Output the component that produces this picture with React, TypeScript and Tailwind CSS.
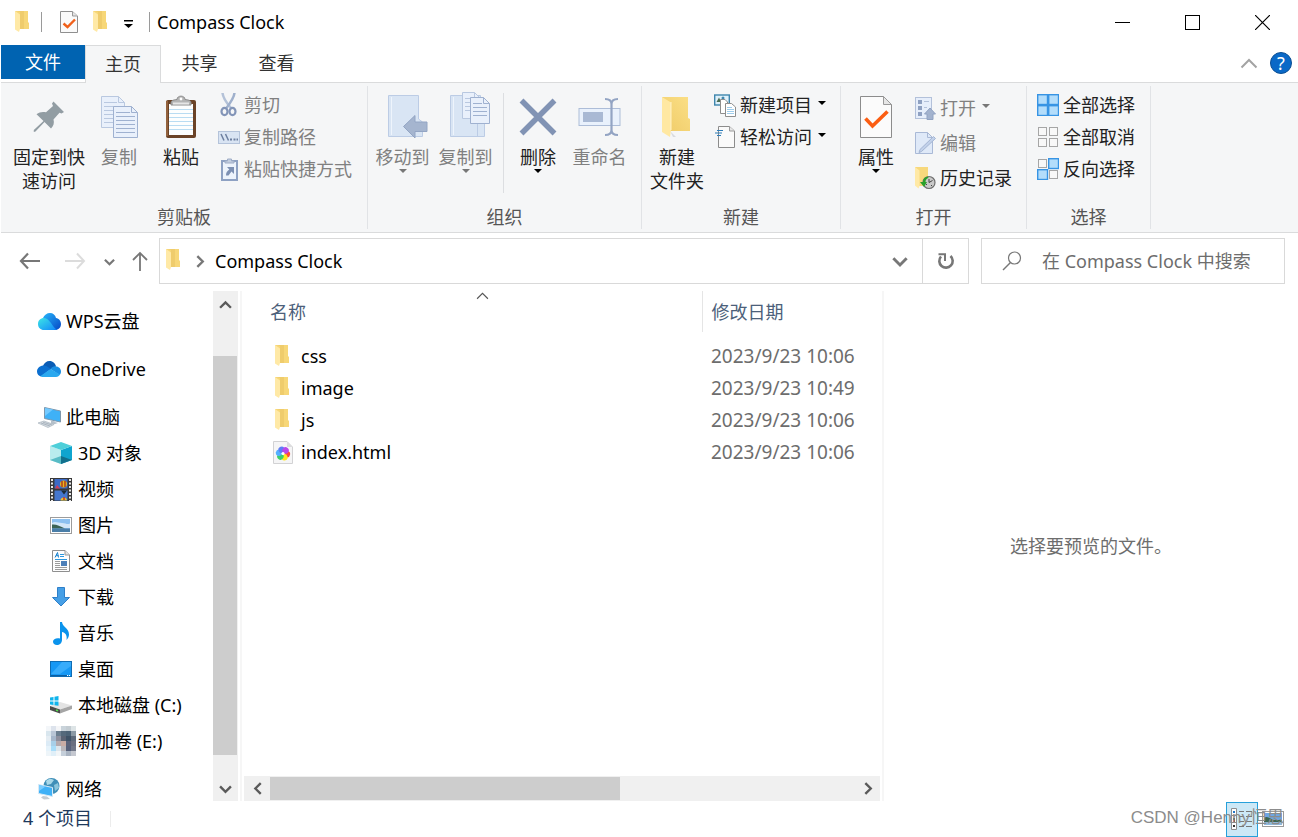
import type { ReactNode } from "react";

/* ---------- icons ---------- */

function SmallFolder() {
  return (
    <svg width="15" height="22" viewBox="0 0 15 22" aria-hidden="true">
      <path d="M0 0H13V11L14 12V18H3Z" fill="#f7d778" />
      <path d="M5 1V18H9V0H2Z" fill="#efcc6c" />
      <path d="M0 0L5 3.500V18L4 21L0 18.500Z" fill="#ffe9a6" />
    </svg>
  );
}

function BigFolder() {
  return (
    <svg width="30" height="42" viewBox="0 0 30 42" aria-hidden="true">
      <defs>
        <linearGradient id="bf" x1="0" y1="1" x2="1" y2="0">
          <stop offset="0" stopColor="#efcb68" />
          <stop offset="1" stopColor="#fbdf86" />
        </linearGradient>
      </defs>
      <path d="M8 35L11 41H14Z" fill="#d9dbdf" />
      <path d="M0 1H26V22L28 23V35H8Z" fill="url(#bf)" />
      <path d="M0 1L9 6.500V34L8 41L0 36Z" fill="#ffe8a2" />
      <path d="M9 6V34" stroke="#fff2c8" />
    </svg>
  );
}

function CheckDoc({ small = false }: { small?: boolean }) {
  return (
    <svg width={small ? 18 : 32} height={small ? 22 : 42} viewBox={small ? "0 0 18 22" : "0 0 32 42"} aria-hidden="true">
      {small ? (
        <>
          <path d="M.5 .5H12.500L17.500 5V21.500H.5Z" fill="#fafafa" stroke="#8f8f8f" />
          <path d="M12.500 .5V5H17.500" fill="#e4e4e4" stroke="#9a9a9a" />
          <path d="M3.500 12.500L7.500 16L15 8.500" fill="none" stroke="#f0601a" strokeWidth="2.400" />
        </>
      ) : (
        <>
          <path d="M.5 .5H23.500L31.500 8.500V41.500H.5Z" fill="#fbfbfb" stroke="#8c8c8c" />
          <path d="M23.500 .5V8.500H31.500Z" fill="#e6e6e6" stroke="#9a9a9a" />
          <path d="M5.500 22.500L12.500 30L27.500 15.500" fill="none" stroke="#fb5e13" strokeWidth="3.600" />
        </>
      )}
    </svg>
  );
}

function Pin() {
  return (
    <svg width="32" height="32" viewBox="0 0 32 32" aria-hidden="true">
      <path
        d="M20.500 .5L31 11L28.500 12.500L26.500 11.700L20.500 18.500C21.500 22 20.500 25 18 27.500L11.500 21L2.500 30.500L.8 31V29L10.500 20L3.500 13.300C6.500 11 9.500 10.400 13 11.300L20 5L19 2.500Z"
        fill="#929da3"
      />
    </svg>
  );
}

function PageLines({ x, y, w, h, dim = false }: { x: number; y: number; w: number; h: number; dim?: boolean }) {
  const stroke = dim ? "#b9c8e0" : "#9fb1d0";
  const rows = Math.floor((h - 8) / 4);
  return (
    <g transform={`translate(${x} ${y})`}>
      <path d={`M.5 .5H${w - 6.5}L${w - 0.5} 6.500V${h - 0.5}H.5Z`} fill="#e9f0fb" stroke={stroke} />
      <path d={`M${w - 6.5} .5V6.500H${w - 0.5}`} fill="none" stroke={stroke} />
      {Array.from({ length: rows }, (_, i) => (
        <path key={i} d={`M3 ${6.5 + i * 4}H${i === 0 ? w - 8 : w - 3}`} stroke={stroke} />
      ))}
    </g>
  );
}

function CopyIcon() {
  return (
    <svg width="37" height="42" viewBox="0 0 37 42" aria-hidden="true">
      <PageLines x={0} y={0} w={24} h={32} dim />
      <PageLines x={12} y={10} w={25} h={32} />
    </svg>
  );
}

function PasteIcon() {
  return (
    <svg width="32" height="44" viewBox="0 0 32 44" aria-hidden="true">
      <rect x="1" y="5" width="30" height="38" rx="2" fill="#6b4327" />
      <path d="M2 6V41" stroke="#93623d" strokeWidth="2" />
      <rect x="4" y="9" width="24" height="31" fill="#fdfefe" />
      <path d="M4 14.500H28M4 18.500H28M4 22.500H28M4 26.500H28M4 30.500H28M4 34.500H28" stroke="#b9dcf2" />
      <path d="M6 10V8C6 5 9 5 12 4.500C12 0 20 0 20 4.500C23 5 26 5 26 8V10Z" fill="#b4b4b4" stroke="#8b8b8b" />
      <circle cx="16" cy="4" r="1.400" fill="#fff" />
      <path d="M8 8.500H24" stroke="#e6e6e6" strokeWidth="2" />
    </svg>
  );
}

function CutIcon() {
  return (
    <svg width="18" height="24" viewBox="0 0 18 24" fill="none" aria-hidden="true">
      <path d="M2.500 0C3 5 6.500 10 11 15" stroke="#b4c2d8" strokeWidth="2.500" />
      <path d="M14.500 0C14 5 11 9 6.500 15" stroke="#9fb0cc" strokeWidth="2.500" />
      <ellipse cx="4.500" cy="18.500" rx="3" ry="3.600" stroke="#8395b8" strokeWidth="2.200" />
      <ellipse cx="12.500" cy="18.500" rx="3" ry="3.600" stroke="#8395b8" strokeWidth="2.200" />
    </svg>
  );
}

function PathIcon() {
  return (
    <svg width="22" height="13" viewBox="0 0 22 13" aria-hidden="true">
      <rect x=".5" y=".5" width="21" height="12" fill="#d9e4f3" stroke="#b4c3da" />
      <path d="M3 3L6 9.500M7.500 3L10.500 9.500" stroke="#6d7fa0" strokeWidth="1.500" />
      <path d="M12 8.500H14M15.500 8.500H17.500M18.500 8.500H20" stroke="#6d7fa0" strokeWidth="2" />
    </svg>
  );
}

function PasteShortcutIcon() {
  return (
    <svg width="17" height="23" viewBox="0 0 17 23" aria-hidden="true">
      <rect x="1" y="3" width="15" height="19" fill="#edf3fc" stroke="#8ea1c3" strokeWidth="2" />
      <path d="M4 5V3H6.500V1H10.500V3H13V5Z" fill="#c3cee0" stroke="#9eacc6" />
      <path d="M6 9H13V16L10.500 13.500L7.500 17.500H5C5 14.500 6 13 8.300 11.500Z" fill="#7d90b3" />
    </svg>
  );
}

function MoveToIcon() {
  return (
    <svg width="51" height="44" viewBox="-11 0 51 44" aria-hidden="true">
      <path d="M.5 .5H30.500V24L34.500 27V41.500H.5Z" fill="#d9e5f4" stroke="#bccce5" />
      <path d="M3.500 2V40" stroke="#eef4fc" />
      <path d="M15.500 31.500L27 20.500V27H39V36.500H27V43Z" fill="#a5b5cf" stroke="#93a5c4" />
    </svg>
  );
}

function CopyToIcon() {
  return (
    <svg width="52" height="50" viewBox="-10 1 52 50" aria-hidden="true">
      <path d="M.5 4.500H30.500V29L34.500 31V45.500H.5Z" fill="#d9e5f4" stroke="#bccce5" />
      <path d="M27.500 31V45" stroke="#bccce5" />
      <path d="M3.500 6V44" stroke="#eef4fc" />
      <PageLines x={12} y={1} w={19} h={27} dim />
      <PageLines x={20} y={6} w={20} h={27} />
    </svg>
  );
}

function DeleteIcon() {
  return (
    <svg width="38" height="38" viewBox="0 0 38 38" aria-hidden="true">
      <path d="M2.500 2.500L35.500 35.500M35.500 2.500L2.500 35.500" stroke="#8193b4" strokeWidth="5.500" />
    </svg>
  );
}

function RenameIcon() {
  return (
    <svg width="44" height="40" viewBox="0 0 44 40" fill="none" aria-hidden="true">
      <rect x="1" y="11.500" width="41" height="17" fill="#e9f1fc" stroke="#adbdd8" />
      <rect x="5" y="15" width="20" height="10" fill="#a9b9d4" />
      <path d="M33.500 6V34M27 2C31 2 33.500 3 33.500 7C33.500 3 36 2 40 2M27 38C31 38 33.500 37 33.500 33C33.500 37 36 38 40 38" stroke="#93a4c3" strokeWidth="2.200" />
    </svg>
  );
}

function NewItemIcon() {
  return (
    <svg width="22" height="23" viewBox="0 0 22 23" aria-hidden="true">
      <rect x=".7" y="1" width="14.600" height="10" fill="#dff1fb" stroke="#3f86ad" strokeWidth="1.400" />
      <path d="M2.500 8L5 3.500L7 8Z" fill="#4b6d53" />
      <circle cx="9" cy="4" r="1.500" fill="#3f86ad" />
      <path d="M6.500 5.500H11L13.500 8V19.500H6.500Z" fill="#fff" stroke="#8e8e8e" />
      <path d="M11.500 9.500H17.500L21.500 13V22.500H11.500Z" fill="#fff" stroke="#8e8e8e" />
      <path d="M13 13.500H18M13 15.500H20M13 17.500H20M13 19.500H20" stroke="#9fcdec" />
    </svg>
  );
}

function EasyAccessIcon() {
  return (
    <svg width="20" height="22" viewBox="0 0 20 22" aria-hidden="true">
      <path d="M3.500 .5H14.500L19.500 5V21.500H3.500Z" fill="#fafafa" stroke="#8c8c8c" />
      <path d="M14.500 .5V5H19.500" fill="#e6e6e6" stroke="#9a9a9a" />
      <path d="M2 4.500H8M0 7H7M2 9.500H6" stroke="#2d7cb8" strokeWidth="1.200" />
    </svg>
  );
}

function OpenIcon() {
  return (
    <svg width="21" height="23" viewBox="0 0 21 23" aria-hidden="true">
      <rect x=".5" y=".5" width="16" height="21" fill="#e6eefb" stroke="#b3c1da" />
      <rect x="3" y="3" width="4" height="4" fill="#8fa1c2" />
      <rect x="3" y="9" width="4" height="4" fill="#8fa1c2" />
      <rect x="3" y="15" width="4" height="4" fill="#8fa1c2" />
      <path d="M9 4.500H14M9 10.500H12" stroke="#b3c1da" />
      <path d="M15 11L20.500 17H18V22.500H12V17H9.500Z" fill="#a2b2ce" stroke="#90a2c2" />
    </svg>
  );
}

function EditIcon() {
  return (
    <svg width="21" height="23" viewBox="0 0 21 23" aria-hidden="true">
      <path d="M.5 .5H12.500L17.500 5.500V21.500H.5Z" fill="#dfe9f8" stroke="#a9b9d6" />
      <path d="M12.500 .5V5.500H17.500" fill="none" stroke="#a9b9d6" />
      <path d="M18.500 4.500L20.500 6.500L6.500 19.500L4 20.500L5 17.500Z" fill="#c2d1ea" stroke="#a4b5d3" />
    </svg>
  );
}

function HistoryIcon() {
  return (
    <svg width="22" height="23" viewBox="0 0 22 23" aria-hidden="true">
      <path d="M1 0H14V19H5Z" fill="#f7d87c" />
      <path d="M1 0L5.500 3.500V19L4.500 21.500L1 18.500Z" fill="#ffe9a6" />
      <circle cx="15" cy="15.500" r="6" fill="#c9c9c9" stroke="#6f6f6f" strokeWidth="1.200" />
      <path d="M15 12V15.500L18.500 13.500M12 18L13 17M17 18L18 19" stroke="#444" fill="none" />
      <path d="M14 9.500C10.500 10 9 12 9 15H6L10 20L13 15H11.500C11.500 13 12.500 11.500 14.500 11Z" fill="#2aa02a" />
    </svg>
  );
}

function Tiles({ on }: { on: [boolean, boolean, boolean, boolean] }) {
  return (
    <svg width="22" height="22" viewBox="0 0 22 22" aria-hidden="true">
      {on.map((active, i) => (
        <rect
          key={i}
          x={(i % 2) * 11 + (active ? 0.7 : 1.5)}
          y={Math.floor(i / 2) * 11 + (active ? 0.7 : 1.5)}
          width={active ? 9.8 : 8}
          height={active ? 9.8 : 8}
          fill={active ? "#b3ddfb" : "#f8f8f8"}
          stroke={active ? "#3794e4" : "#a6a6a6"}
          strokeWidth={active ? 1.4 : 1}
        />
      ))}
    </svg>
  );
}

function WpsCloud() {
  return (
    <svg width="23" height="17" viewBox="0 0 23 17" aria-hidden="true">
      <defs>
        <linearGradient id="wps" x1="0" y1="0" x2="1" y2="1">
          <stop offset="0" stopColor="#27b5fb" />
          <stop offset="1" stopColor="#0546c4" />
        </linearGradient>
        <linearGradient id="wpsl" x1="0" y1="0" x2="1" y2="1">
          <stop offset="0" stopColor="#3de5e5" />
          <stop offset="1" stopColor="#1186fb" />
        </linearGradient>
      </defs>
      <path d="M5 5C6 2 9 0 12 0C15 0 17.500 2 18 5C21 5.500 23 8 23 11C23 14.500 20.500 17 17 17H9Z" fill="url(#wps)" />
      <path d="M6 5C9 5 11 7.500 13 10C15 13 17 16 19 16.500C17 17.200 10 17 6 17C2.500 17 0 14.500 0 11C0 7.500 2.500 5 6 5Z" fill="url(#wpsl)" />
    </svg>
  );
}

function OneDriveIcon() {
  return (
    <svg width="24" height="16" viewBox="0 0 24 16" aria-hidden="true">
      <path d="M6 5C7 2 9.500 0 12.500 0C16 0 18.500 2.500 19 5.500L13 9Z" fill="#0a5cb5" />
      <path d="M6 4.500C8 4 10 5 14 8L4 15.500C1.500 15 0 13 0 10.500C0 7.500 2.500 5 6 4.500Z" fill="#0b6fd0" />
      <path d="M13.500 8C15 6 17 5 19 5.500C22 5.500 24 8 24 10.500C24 12 23.500 13.200 22.500 14Z" fill="#1a8fe3" />
      <path d="M3.500 15L13.500 8L23 13.500C22 15 21 16 19 16H6C5 16 4 15.700 3.500 15Z" fill="#2aa8ef" />
    </svg>
  );
}

function ComputerIcon() {
  return (
    <svg width="24" height="21" viewBox="0 0 24 21" aria-hidden="true">
      <path d="M7.500 .5L23.500 4V15L7.500 11.500Z" fill="#3fb1f7" stroke="#7d97ac" />
      <path d="M8 9L16 2.500L8 1Z" fill="#74caff" />
      <path d="M14 13.500V16L11 16.500L15 18L21 16L18 15V14.500Z" fill="#b5c0ca" />
      <path d="M1 16L7 14L17 17.500L11 20.500Z" fill="#d5dbe0" stroke="#b3bdc5" strokeWidth=".8" />
      <path d="M4 16L13 19M6 15.200L15 18" stroke="#96a4b0" strokeWidth=".7" />
    </svg>
  );
}

function CubeIcon() {
  return (
    <svg width="22" height="22" viewBox="0 0 22 22" aria-hidden="true">
      <path d="M0 4L11 8V22L0 18Z" fill="#b8ecee" />
      <path d="M11 8L22 4V18L11 22Z" fill="#0fa5cf" />
      <path d="M0 4L11 0L22 4L11 8Z" fill="#4ecfd9" />
      <path d="M0 18L11 14V22Z" fill="#58bcc6" />
      <path d="M22 18L11 14V22Z" fill="#12708c" />
    </svg>
  );
}

function VideoIcon() {
  return (
    <svg width="22" height="23" viewBox="0 0 22 23" aria-hidden="true">
      <rect width="22" height="23" fill="#393939" />
      <path d="M2 1V23M20 1V23" stroke="#e8e8e8" strokeWidth="2" strokeDasharray="2 1.500" />
      <rect x="4.500" y="1" width="13" height="9.500" fill="#3d6bc6" />
      <rect x="4.500" y="12.500" width="13" height="10" fill="#4577cf" />
      <path d="M5 10.500L7 7L10 10.500Z" fill="#d83b53" />
      <circle cx="13.500" cy="6" r="3.500" fill="#e6b71e" />
      <path d="M12 3V9M15 3V9" stroke="#a2221b" strokeWidth="1.200" />
      <path d="M11 12.500H17L14 16.500Z" fill="#1c2c38" />
      <path d="M10.500 22.500C10.500 18.500 17 18.500 17 22.500Z" fill="#e9c22c" />
      <path d="M14 19V22" stroke="#c63427" strokeWidth="1.500" />
    </svg>
  );
}

function PictureIcon() {
  return (
    <svg width="22" height="17" viewBox="0 0 22 17" aria-hidden="true">
      <rect x=".5" y=".5" width="21" height="16" fill="#fff" stroke="#9c9c9c" />
      <rect x="2" y="2" width="18" height="13" fill="#8cc0f0" />
      <path d="M2 6C5 4 8 6 12 6S17 8 20 6.500V11H2Z" fill="#d2e6f8" />
      <path d="M2 7.500C6 7 10 9 15 11.500H2Z" fill="#3c6354" />
      <path d="M2 11.500H20V15H2Z" fill="#4a7ea8" />
    </svg>
  );
}

function DocumentIcon() {
  return (
    <svg width="18" height="22" viewBox="0 0 18 22" aria-hidden="true">
      <path d="M.5 .5H13L17.500 5V21.500H.5Z" fill="#fdfdfd" stroke="#8f8f8f" />
      <path d="M13 .5V5H17.500" fill="#e5e5e5" stroke="#9a9a9a" />
      <path d="M3 7.500L5.500 2.500L6.500 7.500M4 5.700H6.500" stroke="#1882cf" fill="none" />
      <path d="M8 4.500H12M8 6.500H12M3 9.500H15" stroke="#2b97de" />
      <path d="M3 11.500H8M3 13.500H8M3 15.500H8M3 17.500H15M3 19.500H15" stroke="#9b9b9b" />
      <rect x="9" y="11" width="6" height="5" fill="#4c7fb8" />
    </svg>
  );
}

function DownloadIcon() {
  return (
    <svg width="20" height="20" viewBox="0 0 20 20" aria-hidden="true">
      <path d="M6.500 .5H13.500V10.500H18.500L10 19L1.500 10.500H6.500Z" fill="#469fe6" stroke="#2e7fc9" />
    </svg>
  );
}

function MusicIcon() {
  return (
    <svg width="18" height="23" viewBox="0 0 18 23" aria-hidden="true">
      <path d="M8 0H10C10.500 5 17 6 17 12.500C17 14.500 16 16.500 14.500 18C15.500 13 13 10.500 10 10V18C10 21 7.500 23 5 23C2.500 23 1 21.500 1 19.500C1 17 4.500 15.500 8 16.500Z" fill="#0a93ec" />
    </svg>
  );
}

function DesktopIcon() {
  return (
    <svg width="22" height="16" viewBox="0 0 22 16" aria-hidden="true">
      <rect x=".5" y=".5" width="21" height="15" fill="#1798f4" stroke="#0f6cb3" />
      <path d="M1 13L12 1H21V5L10 13Z" fill="#38acfb" />
      <path d="M1 14.500H17" stroke="#0b5fa3" />
      <path d="M17 14.500H21" stroke="#fff" strokeDasharray="1 1" />
    </svg>
  );
}

function DiskIcon() {
  return (
    <svg width="22" height="18" viewBox="0 0 22 18" aria-hidden="true">
      <path d="M0 10L10 6L22 9.500L10 13.500Z" fill="#e3e3e3" />
      <path d="M0 1.500L3.500 1V4.500H0ZM4.500 .8L8.500 0V4.500H4.500ZM0 5.500H3.500V9L0 8.600ZM4.500 5.500H8.500V9.800L4.500 9.200Z" fill="#10b4ec" />
      <path d="M0 10L10 13.500V17.500L0 14Z" fill="#4c4c4c" />
      <path d="M10 13.500L22 9.500V13L10 17.500Z" fill="#a5a5a5" />
      <path d="M6 14L8 14.700" stroke="#55e34d" strokeWidth="1.500" />
    </svg>
  );
}

const mosaic = [
  "#f3f6f9", "#dde3ec", "#f4f5f7", "#c9d3da", "#c3ccd2", "#dde4e6",
  "#d9e6ee", "#b9c6d6", "#6c7f90", "#55697b", "#4d6376", "#8c9aa5",
  "#e5edf3", "#a6b7cb", "#8d8f9d", "#5b6373", "#3f5266", "#5e6a7a",
  "#dcebf6", "#a8cfe8", "#b5aaae", "#c9aca5", "#59627a", "#6a6f80",
  "#e6f3fb", "#a9ddf9", "#dce5ec", "#b9b6bb", "#56607a", "#717788",
  "#eef5f9", "#e0eff8", "#f2f5f7", "#c5cfda", "#a9b3c1", "#c5c8d0",
];

function MosaicIcon() {
  return (
    <svg width="30" height="30" viewBox="0 0 30 30" shapeRendering="crispEdges" aria-hidden="true">
      {mosaic.map((color, i) => (
        <rect key={i} x={(i % 6) * 5} y={Math.floor(i / 6) * 5} width="5" height="5" fill={color} />
      ))}
    </svg>
  );
}

function NetworkIcon() {
  return (
    <svg width="22" height="22" viewBox="0 0 22 22" aria-hidden="true">
      <circle cx="13.500" cy="8" r="8" fill="#3f8fb8" />
      <path d="M8 3C11 0 14 1 16 2L13 6L9 7Z" fill="#a9d8e8" />
      <path d="M16 7L20 5L21 10L17 13Z" fill="#8cc6dc" />
      <path d="M.5 6.500L14.500 9.500V18.500L.5 15.500Z" fill="#3fb1f7" stroke="#d8eaf6" />
      <path d="M1 13L8 8.200L1 7Z" fill="#78ccff" />
      <path d="M5 18L9 18.500L12 21L6 21.500L3 19.500Z" fill="#c5cdd3" />
    </svg>
  );
}

function HtmlIcon() {
  const petals = ["#ff4b3a", "#ffe81f", "#3ccf6c", "#54b0ff", "#5d7cf6", "#b949e8"];
  return (
    <svg width="20" height="23" viewBox="0 0 20 23" aria-hidden="true">
      <path d="M.5 .5H14L19.500 6V22.500H.5Z" fill="#f5f5f6" stroke="#d2d2d4" />
      <path d="M14 .5V6H19.500Z" fill="#dcdcde" />
      {petals.map((color, i) => (
        <circle key={i} cx="14" cy="12.500" r="3.200" fill={color} transform={`rotate(${i * 60 + 10} 10 12.500)`} />
      ))}
      <circle cx="10" cy="12.500" r="1.600" fill="#fff" />
    </svg>
  );
}

function Chevron({ dir, size = 12, color = "#5a5a5a", weight = 2 }: { dir: "up" | "down" | "left" | "right"; size?: number; color?: string; weight?: number }) {
  const paths = { up: "M1 9L6 4L11 9", down: "M1 4L6 9L11 4", left: "M9 1L4 6L9 11", right: "M4 1L9 6L4 11" };
  return (
    <svg width={size} height={size} viewBox="0 0 12 12" fill="none" aria-hidden="true">
      <path d={paths[dir]} stroke={color} strokeWidth={weight} />
    </svg>
  );
}

function Caret({ color = "#000" }: { color?: string }) {
  return (
    <svg width="8" height="4" viewBox="0 0 8 4" aria-hidden="true">
      <path d="M0 0H8L4 4Z" fill={color} />
    </svg>
  );
}

/* ---------- ribbon ---------- */

function Group({ label, children, className }: { label: string; children: ReactNode; className: string }) {
  return (
    <section aria-label={label} className="flex py-[3px]">
      <div className="flex flex-col border-r border-[#e1e3e6]">
        <div className={`flex h-[119px] ${className}`}>{children}</div>
        <div className="text-center leading-6 text-[#555]">{label}</div>
      </div>
    </section>
  );
}

function Large({ icon, lines, width, dim = false, menu = false }: { icon: ReactNode; lines: string[]; width: string; dim?: boolean; menu?: boolean }) {
  return (
    <button type="button" disabled={dim} className={`flex shrink-0 flex-col items-center pt-[3px] ${width} ${dim ? "text-[#808080]" : "text-[#222]"}`}>
      <span className="flex h-14 items-center">{icon}</span>
      {lines.map((line) => (
        <span key={line} className="leading-6 whitespace-nowrap">{line}</span>
      ))}
      {menu && <Caret color={dim ? "#777" : "#000"} />}
    </button>
  );
}

function Small({ icon, text, dim = false, menu = false }: { icon: ReactNode; text: string; dim?: boolean; menu?: boolean }) {
  return (
    <button type="button" disabled={dim} className={`flex h-8 items-center gap-1 whitespace-nowrap ${dim ? "text-[#808080]" : "text-[#222]"}`}>
      <span className="flex w-[22px] justify-center">{icon}</span>
      <span>{text}</span>
      {menu && <span className="pb-1 pl-[2px]"><Caret color={dim ? "#777" : "#000"} /></span>}
    </button>
  );
}

function Ribbon() {
  return (
    <div className="flex border-b border-[#dadbdc] bg-[#f5f6f7]">
      <Group label="剪贴板" className="pr-[15px] pl-[7px]">
        <Large icon={<Pin />} lines={["固定到快", "速访问"]} width="w-[82px]" />
        <Large icon={<CopyIcon />} lines={["复制"]} width="w-[58px]" dim />
        <Large icon={<PasteIcon />} lines={["粘贴"]} width="w-[66px]" />
        <div className="ml-1 flex flex-col pt-[3px]">
          <Small icon={<CutIcon />} text="剪切" dim />
          <Small icon={<PathIcon />} text="复制路径" dim />
          <Small icon={<PasteShortcutIcon />} text="粘贴快捷方式" dim />
        </div>
      </Group>
      <Group label="组织" className="pr-2 pl-[3px]">
        <Large icon={<MoveToIcon />} lines={["移动到"]} width="w-[63px]" dim menu />
        <Large icon={<CopyToIcon />} lines={["复制到"]} width="w-[63px]" dim menu />
        <div className="mx-[6px] mt-[7px] h-[100px] w-px bg-[#dcdee1]" />
        <Large icon={<DeleteIcon />} lines={["删除"]} width="w-[56px]" menu />
        <Large icon={<RenameIcon />} lines={["重命名"]} width="w-[67px]" dim />
      </Group>
      <Group label="新建" className="pr-[14px] pl-1">
        <Large icon={<BigFolder />} lines={["新建", "文件夹"]} width="w-[62px]" />
        <div className="ml-[6px] flex flex-col pt-[3px]">
          <Small icon={<NewItemIcon />} text="新建项目" menu />
          <Small icon={<EasyAccessIcon />} text="轻松访问" menu />
        </div>
      </Group>
      <Group label="打开" className="pr-[14px] pl-2">
        <Large icon={<CheckDoc />} lines={["属性"]} width="w-[54px]" menu />
        <div className="ml-[11px] flex flex-col gap-[3px] pt-[6px]">
          <Small icon={<OpenIcon />} text="打开" dim menu />
          <Small icon={<EditIcon />} text="编辑" dim />
          <Small icon={<HistoryIcon />} text="历史记录" />
        </div>
      </Group>
      <Group label="选择" className="pr-[15px] pl-[10px]">
        <div className="flex flex-col pt-[3px]">
          <Small icon={<Tiles on={[true, true, true, true]} />} text="全部选择" />
          <Small icon={<Tiles on={[false, false, false, false]} />} text="全部取消" />
          <Small icon={<Tiles on={[false, true, true, false]} />} text="反向选择" />
        </div>
      </Group>
    </div>
  );
}

/* ---------- window parts ---------- */

function TitleBar() {
  return (
    <header className="flex h-[45px] items-center">
      <div className="flex flex-1 items-center pb-[2px] pl-[14px]">
        <SmallFolder />
        <span className="ml-[11px] h-5 w-px bg-[#9a9a9a]" />
        <button type="button" aria-label="属性" className="ml-[18px]"><CheckDoc small /></button>
        <button type="button" aria-label="新建文件夹" className="ml-[15px]"><SmallFolder /></button>
        <button type="button" aria-label="自定义快速访问工具栏" className="ml-4 pt-1">
          <svg width="9" height="8" viewBox="0 0 9 8"><path d="M0 0H9V1.500H0ZM0 4H9L4.500 8Z" /></svg>
        </button>
        <span className="ml-4 h-5 w-px bg-[#9a9a9a]" />
        <h1 className="ml-[7px]">Compass Clock</h1>
      </div>
      <button type="button" aria-label="最小化" className="flex h-full w-[70px] items-center justify-center">
        <svg width="15" height="15" viewBox="0 0 15 15"><path d="M0 7.500H15" stroke="#000" /></svg>
      </button>
      <button type="button" aria-label="最大化" className="flex h-full w-[70px] items-center justify-center">
        <svg width="15" height="15" viewBox="0 0 15 15"><rect x=".5" y=".5" width="14" height="14" fill="none" stroke="#000" /></svg>
      </button>
      <button type="button" aria-label="关闭" className="flex h-full w-[71px] items-center justify-center">
        <svg width="15" height="15" viewBox="0 0 15 15"><path d="M0 0L15 15M15 0L0 15" stroke="#000" strokeWidth="1.200" /></svg>
      </button>
    </header>
  );
}

function Tabs() {
  return (
    <nav aria-label="功能区" className="flex h-[38px] text-[#333]">
      <div className="border-b border-[#dadbdc]">
        <button type="button" className="h-[34px] w-[84px] bg-[#0063b1] text-white">文件</button>
      </div>
      <button type="button" className="w-[76px] border border-b-0 border-[#dadbdc] bg-[#f5f6f7] pb-[2px]">主页</button>
      <div className="flex flex-1 items-center border-b border-[#dadbdc] pb-[2px]">
        <button type="button" className="w-[77px]">共享</button>
        <button type="button" className="w-[77px]">查看</button>
        <button type="button" aria-label="折叠功能区" className="ml-auto">
          <Chevron dir="up" size={18} color="#a3a3a3" weight={1.3} />
        </button>
        <button type="button" aria-label="帮助" className="mr-[6px] ml-3 flex size-[22px] items-center justify-center rounded-full border border-[#0b4f94] bg-[#0a69c7] text-white">?</button>
      </div>
    </nav>
  );
}

function AddressRow() {
  return (
    <div className="flex h-[58px] items-start pt-[5px] pr-[13px] pl-[18px]">
      <div className="flex h-[46px] items-center">
        <button type="button" aria-label="后退">
          <svg width="22" height="18" viewBox="0 0 22 18" fill="none"><path d="M21 9H2M9 1.500L2 9L9 16.500" stroke="#777" strokeWidth="2.200" /></svg>
        </button>
        <button type="button" aria-label="前进" disabled className="ml-6">
          <svg width="22" height="18" viewBox="0 0 22 18" fill="none"><path d="M0 9H19M12 1.500L19 9L12 16.500" stroke="#dcdcdc" strokeWidth="2" /></svg>
        </button>
        <button type="button" aria-label="最近位置" className="ml-[17px]"><Chevron dir="down" size={11} color="#777" weight={2.4} /></button>
        <button type="button" aria-label="上移" className="ml-[17px]">
          <svg width="16" height="20" viewBox="0 0 16 20" fill="none"><path d="M8 20V2M1 9L8 2L15 9" stroke="#777" strokeWidth="1.800" /></svg>
        </button>
      </div>
      <div className="ml-[11px] flex h-[46px] flex-1 items-center border border-[#d9d9d9]">
        <span className="pb-[2px] pl-[6px]"><SmallFolder /></span>
        <span className="ml-3"><Chevron dir="right" size={13} color="#777" weight={2.2} /></span>
        <a href="#compass-clock" className="ml-[9px] flex-1 text-black">Compass Clock</a>
        <button type="button" aria-label="以前的位置" className="flex w-11 items-center justify-center"><Chevron dir="down" size={16} color="#777" weight={2.2} /></button>
        <button type="button" aria-label="刷新" className="flex h-full w-[46px] items-center justify-center border-l border-[#d9d9d9]">
          <svg width="18" height="18" viewBox="0 0 18 18" fill="none">
            <path d="M4 4.500A6.700 6.700 0 1 0 13.500 4" stroke="#777" strokeWidth="2.600" />
            <path d="M1.500 2.300H8V9" stroke="#777" strokeWidth="2" />
          </svg>
        </button>
      </div>
      <label className="ml-3 flex h-[46px] w-[304px] items-center gap-5 border border-[#d9d9d9] pl-5">
        <svg width="20" height="20" viewBox="0 0 20 20" fill="none" aria-hidden="true">
          <circle cx="12.500" cy="7" r="6" stroke="#777" strokeWidth="1.200" />
          <path d="M8.500 11.500L1 19" stroke="#777" strokeWidth="1.500" />
        </svg>
        <input type="search" aria-label="搜索" placeholder="在 Compass Clock 中搜索" className="w-0 flex-1 outline-none placeholder:text-[#6d6d6d]" />
      </label>
    </div>
  );
}

const roots = {
  wps: { icon: <WpsCloud />, text: "WPS云盘" },
  onedrive: { icon: <OneDriveIcon />, text: "OneDrive" },
  pc: { icon: <ComputerIcon />, text: "此电脑" },
  network: { icon: <NetworkIcon />, text: "网络" },
};

const places = [
  { icon: <CubeIcon />, text: "3D 对象" },
  { icon: <VideoIcon />, text: "视频" },
  { icon: <PictureIcon />, text: "图片" },
  { icon: <DocumentIcon />, text: "文档" },
  { icon: <DownloadIcon />, text: "下载" },
  { icon: <MusicIcon />, text: "音乐" },
  { icon: <DesktopIcon />, text: "桌面" },
  { icon: <DiskIcon />, text: "本地磁盘 (C:)" },
  { icon: <MosaicIcon />, text: "新加卷 (E:)" },
];

function RootItem({ icon, text }: { icon: ReactNode; text: string }) {
  return (
    <a href={`#${text}`} className="flex h-9 items-center gap-[5px] pl-[37px]">
      <span className="flex w-6 justify-center">{icon}</span>
      {text}
    </a>
  );
}

function NavPane() {
  return (
    <aside className="flex w-[242px] shrink-0 border-r-2 border-[#f6f6f6]">
      <nav aria-label="导航窗格" className="-mb-2 flex flex-1 flex-col gap-3 pt-3 text-black">
        <RootItem {...roots.wps} />
        <RootItem {...roots.onedrive} />
        <div>
          <RootItem {...roots.pc} />
          <ul>
            {places.map((p) => (
              <li key={p.text}>
                <a href={`#${p.text}`} className="flex h-9 items-center gap-[2px] pl-[46px] whitespace-nowrap">
                  <span className="flex w-[30px] justify-center">{p.icon}</span>
                  {p.text}
                </a>
              </li>
            ))}
          </ul>
        </div>
        <RootItem {...roots.network} />
      </nav>
      <div className="mr-[2px] flex w-[25px] flex-col bg-[#f0f0f0]">
        <button type="button" aria-label="向上滚动" className="flex h-[26px] items-center justify-center"><Chevron dir="up" size={13} weight={2.2} /></button>
        <div className="flex flex-1 flex-col pr-px">
          <div className="h-[39px]" />
          <div className="flex-1 bg-[#cdcdcd]" />
          <div className="h-5" />
        </div>
        <button type="button" aria-label="向下滚动" className="flex h-[26px] items-center justify-center"><Chevron dir="down" size={13} weight={2.2} /></button>
      </div>
    </aside>
  );
}

const files = [
  { icon: <SmallFolder />, name: "css", date: "2023/9/23 10:06" },
  { icon: <SmallFolder />, name: "image", date: "2023/9/23 10:49" },
  { icon: <SmallFolder />, name: "js", date: "2023/9/23 10:06" },
  { icon: <HtmlIcon />, name: "index.html", date: "2023/9/23 10:06" },
];

function FileList() {
  return (
    <section aria-label="文件" className="flex flex-1 flex-col border-r-2 border-[#f6f6f6]">
      <table className="w-full table-fixed text-left">
        <thead>
          <tr className="h-[41px] text-[#4c607a]">
            <th className="relative border-r border-[#e5e5e5] pl-7 font-normal">
              名称
              <span className="absolute top-0 left-1/2 ml-1 flex h-2 items-center"><Chevron dir="up" size={13} color="#555" weight={1} /></span>
            </th>
            <th className="w-[180px] pl-[9px] font-normal">修改日期</th>
          </tr>
        </thead>
        <tbody>
          <tr className="h-2"><td colSpan={2} /></tr>
          {files.map((f) => (
            <tr key={f.name} className="h-8">
              <td className="pl-[30px] text-black">
                <span className="flex items-center gap-2">
                  <span className="flex w-[21px] justify-center">{f.icon}</span>
                  {f.name}
                </span>
              </td>
              <td className="pl-[9px] text-[19px] whitespace-nowrap text-[#6d6d6d]">{f.date}</td>
            </tr>
          ))}
        </tbody>
      </table>
      <div className="mt-auto mr-[2px] ml-[2px] flex h-[25px] bg-[#f0f0f0]">
        <button type="button" aria-label="向左滚动" className="flex w-[26px] items-center justify-center"><Chevron dir="left" size={13} weight={2.2} /></button>
        <div className="flex flex-1 py-px">
          <div className="w-3/5 bg-[#cdcdcd]" />
        </div>
        <button type="button" aria-label="向右滚动" className="flex w-[26px] items-center justify-center"><Chevron dir="right" size={13} weight={2.2} /></button>
      </div>
    </section>
  );
}

function StatusBar() {
  return (
    <footer className="relative flex h-9 items-center pl-[22px] text-[#1e395b]">
      <span className="pb-[2px]">4 个项目</span>
      <span className="ml-[18px] h-4 w-px bg-[#ececec]" />
      <div className="mr-[14px] ml-auto flex h-full items-center gap-1">
        <button type="button" aria-label="详细信息" className="flex h-[35px] w-8 items-center justify-center border border-[#26a0da] bg-[#cce8f6]">
          <svg width="22" height="22" viewBox="0 0 22 22" aria-hidden="true">
            <path d="M.5 .5H5.500V21.500H.5ZM.5 7.500H5.500M.5 14.500H5.500" fill="#fff" stroke="#8e8e8e" />
            <rect x="2" y="3" width="2" height="2" fill="#2478c9" />
            <rect x="2" y="10" width="2" height="2" fill="#333" />
            <rect x="2" y="12" width="2" height="2" fill="#e22" />
            <rect x="2" y="17" width="2" height="2" fill="#333" />
            <path d="M8 3.500H13M15 3.500H21M8 8.500H13M15 8.500H21M8 13.500H13M15 13.500H21M8 18.500H13M15 18.500H21" stroke="#777" />
          </svg>
        </button>
        <button type="button" aria-label="大缩略图">
          <svg width="22" height="16" viewBox="0 0 22 16" aria-hidden="true">
            <rect x=".5" y=".5" width="21" height="15" fill="#fff" stroke="#9a9a9a" />
            <rect x="2" y="2" width="18" height="12" fill="#6ea6e2" />
            <path d="M2 7C5 4 8 8 12 9H20V11H2Z" fill="#3d6550" />
            <path d="M2 11H20V14H2Z" fill="#8fb8dc" />
          </svg>
        </button>
      </div>
      <span className="absolute top-[5px] right-[14px] font-['Liberation_Sans','Noto_Sans_CJK_SC',sans-serif] text-[17px] whitespace-nowrap text-[#8c8c8c]">CSDN @Henny恒思</span>
    </footer>
  );
}

export default function App() {
  return (
    <div className="flex min-h-screen flex-col bg-white pl-px font-['Noto_Sans','Noto_Sans_CJK_SC',sans-serif] text-[18px] leading-6 text-black">
      <TitleBar />
      <Tabs />
      <Ribbon />
      <AddressRow />
      <main className="-ml-px flex flex-1">
        <NavPane />
        <FileList />
        <section aria-label="预览" className="flex w-[414px] items-center justify-center text-[#6d6d6d]">选择要预览的文件。</section>
      </main>
      <StatusBar />
    </div>
  );
}
